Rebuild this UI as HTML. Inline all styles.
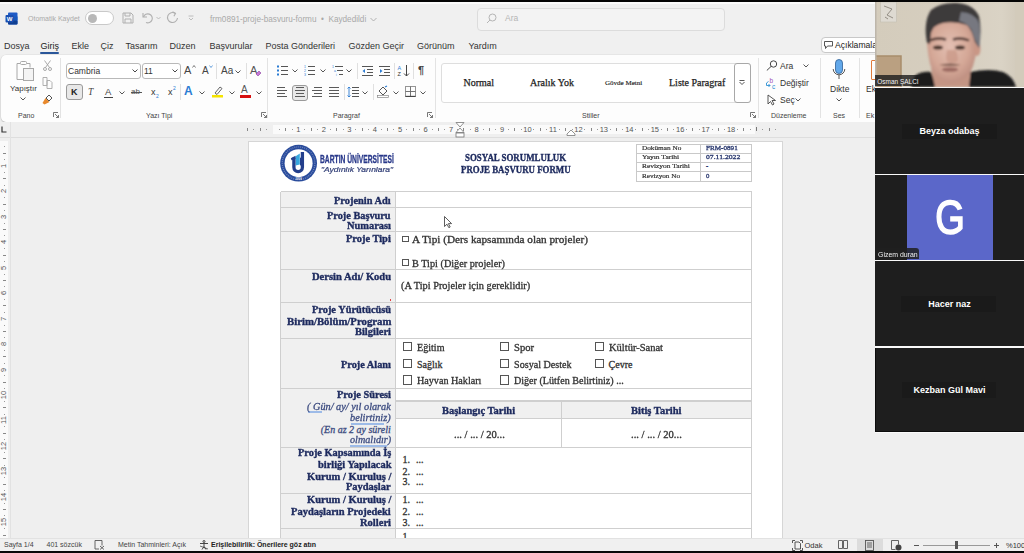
<!DOCTYPE html>
<html><head><meta charset="utf-8">
<style>
*{margin:0;padding:0;box-sizing:border-box}
html,body{width:1024px;height:553px;overflow:hidden;background:#efefef;font-family:"Liberation Sans",sans-serif;position:relative}
.a{position:absolute;white-space:nowrap}
.ui{font-family:"Liberation Sans",sans-serif;color:#262626}
.doc{font-family:"Liberation Serif",serif}
</style></head><body>
<!-- top black bar -->
<div class="a" style="left:0;top:0;width:1024px;height:2px;background:#050505"></div>
<div class="a" style="left:0;top:2px;width:1024px;height:2px;background:#fbfbfb"></div>

<!-- TITLEBAR -->
<div class="a" style="left:0;top:4px;width:1024px;height:32px;background:#f0f0f0"></div>
<!-- word icon -->
<svg class="a" style="left:5px;top:12px" width="13" height="13" viewBox="0 0 13 13">
<rect x="3" y="0.5" width="9.5" height="12" rx="1" fill="#1e5bc6"/><rect x="3" y="4.5" width="9.5" height="4" fill="#185abd"/><rect x="3" y="8.5" width="9.5" height="4" rx="1" fill="#103f91"/>
<rect x="0.5" y="3" width="8" height="7.5" rx="1" fill="#1a4fb0"/>
<text x="4.5" y="9" font-family="Liberation Sans" font-weight="bold" font-size="6" fill="#fff" text-anchor="middle">W</text></svg>
<div class="a" style="left:28px;top:14.5px;font-size:7px;color:#aaaaaa">Otomatik Kaydet</div>
<div class="a" style="left:85px;top:11px;width:29px;height:14px;border:1px solid #c9c9c9;border-radius:7px;background:#fff"></div>
<div class="a" style="left:88px;top:14px;width:9px;height:9px;border-radius:50%;background:#b8b8b8"></div>
<!-- save -->
<svg class="a" style="left:122px;top:12px" width="12" height="12" viewBox="0 0 12 12" fill="none" stroke="#b0b0b0" stroke-width="1">
<path d="M1 1h8l2 2v8H1z"/><path d="M3 1v3h5V1"/><path d="M3 11V7h6v4"/></svg>
<!-- undo -->
<svg class="a" style="left:141px;top:11px" width="13" height="13" viewBox="0 0 13 13" fill="none" stroke="#b0b0b0" stroke-width="1.1">
<path d="M2 2v4h4"/><path d="M2.5 6A4.5 4.5 0 1 1 5 11.5"/></svg>
<svg class="a" style="left:156px;top:16px" width="5" height="4" viewBox="0 0 5 4" fill="none" stroke="#b0b0b0" stroke-width="0.8"><path d="M0.5 1l2 2 2-2"/></svg>
<!-- redo -->
<svg class="a" style="left:166px;top:11px" width="13" height="13" viewBox="0 0 13 13" fill="none" stroke="#b0b0b0" stroke-width="1.1">
<path d="M6.5 0.8l3 1.6-1.6 2.8"/><path d="M9.2 2.3A5 5 0 1 0 11.5 7"/></svg>
<svg class="a" style="left:188px;top:15px" width="6" height="6" viewBox="0 0 6 6" fill="none" stroke="#b0b0b0" stroke-width="0.8"><path d="M0.5 1h5M1 3l2 2 2-2"/></svg>
<div class="a" style="left:210px;top:14.5px;font-size:8.2px;color:#a9a9a9">frm0891-proje-basvuru-formu &nbsp;•&nbsp; Kaydedildi</div>
<svg class="a" style="left:370px;top:17px" width="7" height="5" viewBox="0 0 7 5" fill="none" stroke="#a9a9a9" stroke-width="0.9"><path d="M0.5 1l3 3 3-3"/></svg>
<!-- search -->
<div class="a" style="left:477px;top:8px;width:248px;height:23px;border:1px solid #dcdcdc;border-radius:4px;background:#f3f3f3"></div>
<svg class="a" style="left:486px;top:13px" width="11" height="11" viewBox="0 0 11 11" fill="none" stroke="#b5b5b5" stroke-width="1"><circle cx="6.5" cy="4.5" r="3.5"/><path d="M4 7l-3 3"/></svg>
<div class="a" style="left:505px;top:13px;font-size:8.5px;color:#b5b5b5">Ara</div>


<!-- TABS -->
<div class="a ui" style="left:0;top:36px;width:1024px;height:19px;background:#f0f0f0"></div>
<div class="a ui" style="left:4px;top:40.6px;font-size:9px;color:#333">Dosya</div>
<div class="a ui" style="left:40.5px;top:40.6px;font-size:9px;color:#222">Giriş</div>
<div class="a" style="left:40px;top:52px;width:19px;height:2px;background:#2b579a;border-radius:1px"></div>
<div class="a ui" style="left:71.5px;top:40.6px;font-size:9px;color:#333">Ekle</div>
<div class="a ui" style="left:100.5px;top:40.6px;font-size:9px;color:#333">Çiz</div>
<div class="a ui" style="left:125.5px;top:40.6px;font-size:9px;color:#333">Tasarım</div>
<div class="a ui" style="left:169.5px;top:40.6px;font-size:9px;color:#333">Düzen</div>
<div class="a ui" style="left:209.5px;top:40.6px;font-size:9px;color:#333">Başvurular</div>
<div class="a ui" style="left:265.5px;top:40.6px;font-size:9px;color:#333">Posta Gönderileri</div>
<div class="a ui" style="left:348.5px;top:40.6px;font-size:9px;color:#333">Gözden Geçir</div>
<div class="a ui" style="left:417px;top:40.6px;font-size:9px;color:#333">Görünüm</div>
<div class="a ui" style="left:468.5px;top:40.6px;font-size:9px;color:#333">Yardım</div>
<div class="a" style="left:821px;top:37px;width:70px;height:15.5px;border:1px solid #c8c8c8;border-radius:4px;background:#fff"></div>
<svg class="a" style="left:824px;top:40.5px" width="9" height="8" viewBox="0 0 9 8" fill="none" stroke="#444" stroke-width="0.9"><path d="M0.5 0.5h8v4.5H3.5L1.5 7.5V5H0.5z"/></svg>
<div class="a ui" style="left:835px;top:40px;font-size:8.6px;color:#222">Açıklamalar</div>


<!-- RIBBON -->
<div class="a" style="left:1px;top:55px;width:1000px;height:67px;background:#fdfdfd;border-radius:5px;box-shadow:0 0 0 0.5px rgba(0,0,0,0.07),0 1px 1.5px rgba(0,0,0,0.18)"></div>
<!-- PANO -->
<svg class="a" style="left:14px;top:60px" width="22" height="22" viewBox="0 0 22 22" fill="none" stroke="#a8a8a8" stroke-width="1">
<path d="M3 3.5h3M13 3.5h3v4"/><rect x="6.5" y="1.5" width="6" height="3" rx="1"/><path d="M3 3.5v16h6"/><rect x="9.5" y="8.5" width="10" height="12" fill="#f4f4f4"/></svg>
<div class="a ui" style="left:10px;top:84px;font-size:8px;color:#333">Yapıştır</div>
<svg class="a" style="left:20px;top:97px" width="6" height="4" viewBox="0 0 6 4" fill="none" stroke="#444" stroke-width="0.9"><path d="M0.5 0.5l2.5 2.5 2.5-2.5"/></svg>
<svg class="a" style="left:43px;top:60px" width="9" height="11" viewBox="0 0 9 11" fill="none" stroke="#a0a0a0" stroke-width="0.9"><path d="M1.5 0.5l5 7M7.5 0.5l-5 7"/><circle cx="2" cy="9" r="1.5"/><circle cx="7" cy="9" r="1.5"/></svg>
<svg class="a" style="left:42px;top:77px" width="11" height="12" viewBox="0 0 11 12" fill="none" stroke="#a8a8a8" stroke-width="0.9"><path d="M1 0.5h4v8H1z"/><path d="M5 3.5h3l2 2v6H5z"/></svg>
<svg class="a" style="left:42px;top:94px" width="11" height="11" viewBox="0 0 11 11"><path d="M0.5 9l3-5 4 4-5 2.5z" fill="#e8892c"/><path d="M4 4l3-3 3 3-3 3z" fill="none" stroke="#555" stroke-width="1"/></svg>
<div class="a ui" style="left:18px;top:112px;font-size:7px;color:#444">Pano</div>
<svg class="a" style="left:53px;top:112px" width="6" height="6" viewBox="0 0 6 6" fill="none" stroke="#555" stroke-width="0.8"><path d="M0.5 5V0.5H5M2 2l3.5 3.5M3 5.5h2.5V3"/></svg>
<div class="a" style="left:60px;top:58px;width:1px;height:60px;background:#e3e3e3"></div>
<!-- YAZI TIPI -->
<div class="a" style="left:66px;top:63px;width:75px;height:16px;border:1px solid #b9b9b9;border-radius:3px;background:#fff"></div>
<div class="a ui" style="left:68px;top:66px;font-size:8.5px;color:#333">Cambria</div>
<svg class="a" style="left:132px;top:69px" width="6" height="4" viewBox="0 0 6 4" fill="none" stroke="#333" stroke-width="0.9"><path d="M0.5 0.5l2.5 2.5 2.5-2.5"/></svg>
<div class="a" style="left:142px;top:63px;width:39px;height:16px;border:1px solid #b9b9b9;border-radius:3px;background:#fff"></div>
<div class="a ui" style="left:144px;top:66px;font-size:8.5px;color:#333">11</div>
<svg class="a" style="left:172px;top:69px" width="6" height="4" viewBox="0 0 6 4" fill="none" stroke="#333" stroke-width="0.9"><path d="M0.5 0.5l2.5 2.5 2.5-2.5"/></svg>
<div class="a ui" style="left:184px;top:64px;font-size:11px;color:#444">A</div>
<svg class="a" style="left:192px;top:65px" width="4" height="3" viewBox="0 0 4 3" fill="none" stroke="#444" stroke-width="0.7"><path d="M0.5 2.5l1.5-2 1.5 2"/></svg>
<div class="a ui" style="left:202px;top:65px;font-size:10px;color:#444">A</div>
<svg class="a" style="left:209px;top:65px" width="4" height="3" viewBox="0 0 4 3" fill="none" stroke="#2b7cd3" stroke-width="0.7"><path d="M0.5 0.5l1.5 2 1.5-2"/></svg>
<div class="a" style="left:216px;top:63px;width:1px;height:16px;background:#e0e0e0"></div>
<div class="a ui" style="left:221px;top:65px;font-size:10px;color:#444">Aa</div>
<svg class="a" style="left:235px;top:70px" width="6" height="4" viewBox="0 0 6 4" fill="none" stroke="#444" stroke-width="0.9"><path d="M0.5 0.5l2.5 2.5 2.5-2.5"/></svg>
<div class="a" style="left:246px;top:63px;width:1px;height:16px;background:#e0e0e0"></div>
<div class="a ui" style="left:250px;top:64px;font-size:11px;color:#555">A</div>
<svg class="a" style="left:255px;top:70px" width="7" height="6" viewBox="0 0 7 6"><path d="M1 4l3-3 2 2-3 3z" fill="#c678d6" stroke="#8b3fa0" stroke-width="0.6"/></svg>
<!-- row 2 -->
<div class="a" style="left:66px;top:84px;width:17px;height:16px;border:1px solid #9a9a9a;border-radius:3px;background:#e8e8e8"></div>
<div class="a ui" style="left:71px;top:87px;font-size:9px;font-weight:bold;color:#222">K</div>
<div class="a ui" style="left:88px;top:87px;font-size:9.5px;font-style:italic;color:#444;font-family:'Liberation Serif'">T</div>
<div class="a ui" style="left:105px;top:86px;font-size:9.5px;color:#444">A</div>
<div class="a" style="left:104px;top:97px;width:9px;height:1px;background:#444"></div>
<svg class="a" style="left:119px;top:91px" width="6" height="4" viewBox="0 0 6 4" fill="none" stroke="#444" stroke-width="0.9"><path d="M0.5 0.5l2.5 2.5 2.5-2.5"/></svg>
<div class="a ui" style="left:131px;top:87px;font-size:8px;color:#555">ab</div>
<div class="a" style="left:131px;top:92px;width:11px;height:1px;background:#555"></div>
<div class="a ui" style="left:151px;top:87px;font-size:9px;color:#333">x</div>
<div class="a ui" style="left:156px;top:93px;font-size:5px;color:#2b7cd3">2</div>
<div class="a ui" style="left:168px;top:87px;font-size:9px;color:#333">x</div>
<div class="a ui" style="left:173px;top:85px;font-size:5px;color:#2b7cd3">2</div>
<div class="a" style="left:180px;top:84px;width:1px;height:16px;background:#e0e0e0"></div>
<div class="a ui" style="left:184px;top:84px;font-size:12px;font-weight:bold;color:#2b7cd3">A</div>
<svg class="a" style="left:199px;top:91px" width="6" height="4" viewBox="0 0 6 4" fill="none" stroke="#444" stroke-width="0.9"><path d="M0.5 0.5l2.5 2.5 2.5-2.5"/></svg>
<svg class="a" style="left:212px;top:85px" width="12" height="13" viewBox="0 0 12 13"><path d="M3 8l5-6 2 1.5-5 6z" fill="none" stroke="#555" stroke-width="0.9"/><rect x="0" y="10" width="11" height="2.5" fill="#f5e400"/></svg>
<svg class="a" style="left:229px;top:91px" width="6" height="4" viewBox="0 0 6 4" fill="none" stroke="#444" stroke-width="0.9"><path d="M0.5 0.5l2.5 2.5 2.5-2.5"/></svg>
<div class="a ui" style="left:241px;top:84px;font-size:10px;color:#555">A</div>
<div class="a" style="left:240px;top:95px;width:11px;height:2.5px;background:#d61010"></div>
<svg class="a" style="left:256px;top:91px" width="6" height="4" viewBox="0 0 6 4" fill="none" stroke="#444" stroke-width="0.9"><path d="M0.5 0.5l2.5 2.5 2.5-2.5"/></svg>
<div class="a ui" style="left:146px;top:112px;font-size:7px;color:#444">Yazı Tipi</div>
<svg class="a" style="left:261px;top:112px" width="6" height="6" viewBox="0 0 6 6" fill="none" stroke="#555" stroke-width="0.8"><path d="M0.5 5V0.5H5M2 2l3.5 3.5M3 5.5h2.5V3"/></svg>
<div class="a" style="left:267px;top:58px;width:1px;height:60px;background:#e3e3e3"></div>
<svg class="a" style="left:277px;top:65px" width="11" height="12" viewBox="0 0 11 12"><g fill="#2b7cd3"><rect x="0" y="0.5" width="2" height="2"/><rect x="0" y="4.5" width="2" height="2"/><rect x="0" y="8.5" width="2" height="2"/></g><g stroke="#555" stroke-width="1.1"><path d="M4 1.5h7M4 5.5h7M4 9.5h7"/></g></svg>
<svg class="a" style="left:292px;top:69px" width="6" height="4" viewBox="0 0 6 4" fill="none" stroke="#444" stroke-width="0.9"><path d="M0.5 0.5l2.5 2.5 2.5-2.5"/></svg>
<svg class="a" style="left:304px;top:65px" width="11" height="12" viewBox="0 0 11 12"><g fill="#2b7cd3" font-size="3.5" font-family="Liberation Sans"><text x="0" y="3">1</text><text x="0" y="7">2</text><text x="0" y="11">3</text></g><g stroke="#555" stroke-width="1.1"><path d="M4 1.5h7M4 5.5h7M4 9.5h7"/></g></svg>
<svg class="a" style="left:320px;top:69px" width="6" height="4" viewBox="0 0 6 4" fill="none" stroke="#444" stroke-width="0.9"><path d="M0.5 0.5l2.5 2.5 2.5-2.5"/></svg>
<svg class="a" style="left:332px;top:65px" width="11" height="12" viewBox="0 0 11 12"><g fill="#2b7cd3" font-size="3.5" font-family="Liberation Sans"><text x="0" y="3">1</text><text x="2" y="7">a</text><text x="4" y="11">i</text></g><g stroke="#555" stroke-width="1.1"><path d="M3 1.5h8M5 5.5h6M7 9.5h4"/></g></svg>
<svg class="a" style="left:346px;top:69px" width="6" height="4" viewBox="0 0 6 4" fill="none" stroke="#444" stroke-width="0.9"><path d="M0.5 0.5l2.5 2.5 2.5-2.5"/></svg>
<div class="a" style="left:357px;top:63px;width:1px;height:16px;background:#e0e0e0"></div>
<svg class="a" style="left:362px;top:65px" width="11" height="12" viewBox="0 0 11 12"><g stroke="#555" stroke-width="1.1"><path d="M0 1.5h11M5 4.5h6M5 7.5h6M0 10.5h11"/></g><path d="M0.5 6l2.5-2v4z" fill="#2b7cd3"/></svg>
<svg class="a" style="left:379px;top:65px" width="11" height="12" viewBox="0 0 11 12"><g stroke="#555" stroke-width="1.1"><path d="M0 1.5h11M5 4.5h6M5 7.5h6M0 10.5h11"/></g><path d="M3.5 6l-2.5-2v4z" fill="#2b7cd3"/></svg>
<div class="a" style="left:394px;top:63px;width:1px;height:16px;background:#e0e0e0"></div>
<svg class="a" style="left:397px;top:64px" width="13" height="13" viewBox="0 0 13 13"><text x="0.5" y="5.5" font-size="5.5" font-family="Liberation Sans" fill="#2b7cd3">A</text><text x="0.5" y="12" font-size="5.5" font-family="Liberation Sans" fill="#333">Z</text><path d="M9.5 1v11M7 9.5l2.5 2.5 2.5-2.5" fill="none" stroke="#444" stroke-width="1"/></svg>
<div class="a" style="left:413px;top:63px;width:1px;height:16px;background:#e0e0e0"></div>
<div class="a ui" style="left:418px;top:64px;font-size:11px;font-weight:bold;color:#444">¶</div>
<svg class="a" style="left:277px;top:86px" width="10" height="12" viewBox="0 0 10 12" stroke="#5a5a5a" stroke-width="1"><path d="M0 1.5H8"/><path d="M0 4.5H10"/><path d="M0 7.5H8"/><path d="M0 10.5H10"/></svg>
<div class="a" style="left:292px;top:85px;width:16px;height:16px;border:1px solid #9a9a9a;border-radius:3px;background:#e8e8e8"></div>
<svg class="a" style="left:295px;top:86px" width="10" height="12" viewBox="0 0 10 12" stroke="#5a5a5a" stroke-width="1"><path d="M1 1.5H9"/><path d="M0 4.5H10"/><path d="M1 7.5H9"/><path d="M0 10.5H10"/></svg>
<svg class="a" style="left:312px;top:86px" width="10" height="12" viewBox="0 0 10 12" stroke="#5a5a5a" stroke-width="1"><path d="M2 1.5H10"/><path d="M0 4.5H10"/><path d="M2 7.5H10"/><path d="M0 10.5H10"/></svg>
<svg class="a" style="left:329px;top:86px" width="10" height="12" viewBox="0 0 10 12" stroke="#5a5a5a" stroke-width="1"><path d="M0 1.5H10"/><path d="M0 4.5H10"/><path d="M0 7.5H10"/><path d="M0 10.5H10"/></svg>
<div class="a" style="left:344px;top:84px;width:1px;height:16px;background:#e0e0e0"></div>
<svg class="a" style="left:347px;top:86px" width="12" height="12" viewBox="0 0 12 12"><path d="M2 1v10M0.5 2.5L2 1l1.5 1.5M0.5 9.5L2 11l1.5-1.5" fill="none" stroke="#2b7cd3" stroke-width="0.9"/><g stroke="#555" stroke-width="1"><path d="M5 1.5h7M5 4.5h7M5 7.5h7M5 10.5h7"/></g></svg>
<svg class="a" style="left:362px;top:91px" width="6" height="4" viewBox="0 0 6 4" fill="none" stroke="#444" stroke-width="0.9"><path d="M0.5 0.5l2.5 2.5 2.5-2.5"/></svg>
<div class="a" style="left:373px;top:84px;width:1px;height:16px;background:#e0e0e0"></div>
<svg class="a" style="left:377px;top:85px" width="12" height="13" viewBox="0 0 12 13"><path d="M2 6l4-4 4 4-4 4z" fill="none" stroke="#555" stroke-width="1"/><path d="M8 2l2-1" stroke="#2b7cd3" stroke-width="1.2"/><rect x="0.5" y="10.5" width="11" height="2" fill="#fff" stroke="#888" stroke-width="0.7"/></svg>
<svg class="a" style="left:393px;top:91px" width="6" height="4" viewBox="0 0 6 4" fill="none" stroke="#444" stroke-width="0.9"><path d="M0.5 0.5l2.5 2.5 2.5-2.5"/></svg>
<svg class="a" style="left:405px;top:86px" width="11" height="11" viewBox="0 0 11 11" fill="none" stroke="#666" stroke-width="0.9"><rect x="0.5" y="0.5" width="10" height="10" stroke-dasharray="1 0"/><path d="M5.5 0.5v10M0.5 5.5h10"/><path d="M0.5 10.5h10" stroke="#444" stroke-width="1.3"/></svg>
<svg class="a" style="left:420px;top:91px" width="6" height="4" viewBox="0 0 6 4" fill="none" stroke="#444" stroke-width="0.9"><path d="M0.5 0.5l2.5 2.5 2.5-2.5"/></svg>
<div class="a ui" style="left:333px;top:112px;font-size:7px;color:#444">Paragraf</div>
<svg class="a" style="left:427px;top:112px" width="6" height="6" viewBox="0 0 6 6" fill="none" stroke="#555" stroke-width="0.8"><path d="M0.5 5V0.5H5M2 2l3.5 3.5M3 5.5h2.5V3"/></svg>
<div class="a" style="left:435px;top:58px;width:1px;height:60px;background:#e3e3e3"></div>
<div class="a" style="left:441px;top:63px;width:310px;height:40px;border:1px solid #dedede;border-radius:3px;background:#fff"></div>
<div class="a" style="left:734px;top:63px;width:17px;height:40px;border:1px solid #a8a8a8;border-radius:3px;background:#fff"></div>
<svg class="a" style="left:739px;top:80px" width="6" height="5" viewBox="0 0 6 5" fill="none" stroke="#444" stroke-width="0.9"><path d="M0.5 0.5h5M0.5 2l2.5 2.5 2.5-2.5"/></svg>
<div class="a doc" style="left:463.5px;top:77px;font-size:10px;color:#222;-webkit-text-stroke:0.25px #222">Normal</div>
<div class="a doc" style="left:530px;top:77px;font-size:10px;color:#222;-webkit-text-stroke:0.25px #222">Aralık Yok</div>
<div class="a doc" style="left:605px;top:79px;font-size:7px;color:#222;-webkit-text-stroke:0.15px #222">Gövde Metni</div>
<div class="a doc" style="left:669px;top:77px;font-size:10px;color:#222;-webkit-text-stroke:0.25px #222">Liste Paragraf</div>
<div class="a ui" style="left:582px;top:112px;font-size:7px;color:#444">Stiller</div>
<svg class="a" style="left:750px;top:112px" width="6" height="6" viewBox="0 0 6 6" fill="none" stroke="#555" stroke-width="0.8"><path d="M0.5 5V0.5H5M2 2l3.5 3.5M3 5.5h2.5V3"/></svg>
<div class="a" style="left:757.5px;top:58px;width:1px;height:60px;background:#e3e3e3"></div>
<svg class="a" style="left:766px;top:60px" width="12" height="11" viewBox="0 0 12 11" fill="none" stroke="#444" stroke-width="1"><circle cx="7.5" cy="4" r="3.2"/><path d="M5.2 6.3L0.8 10.5"/></svg>
<div class="a ui" style="left:780px;top:61px;font-size:8.5px;color:#333">Ara</div>
<svg class="a" style="left:803px;top:64px" width="6" height="4" viewBox="0 0 6 4" fill="none" stroke="#444" stroke-width="0.9"><path d="M0.5 0.5l2.5 2.5 2.5-2.5"/></svg>
<svg class="a" style="left:765px;top:77px" width="12" height="12" viewBox="0 0 12 12"><text x="4.5" y="5.5" font-size="6.5" font-family="Liberation Sans" fill="#a04fb8">b</text><text x="7" y="11.8" font-size="6.5" font-family="Liberation Sans" fill="#2b8fd3">c</text><path d="M3.5 4.5Q0.5 5.5 1.5 8.5L5 8.5M3.5 7l1.5 1.5-1.5 1.5" fill="none" stroke="#2b8fd3" stroke-width="0.9"/></svg>
<div class="a ui" style="left:780px;top:78px;font-size:8.5px;color:#333">Değiştir</div>
<svg class="a" style="left:767px;top:94px" width="9" height="12" viewBox="0 0 9 12" fill="#fff" stroke="#444" stroke-width="0.9"><path d="M1 1v9l2.5-2.5 2 3.5 1.5-1-2-3.5h3.5z"/></svg>
<div class="a ui" style="left:780px;top:95px;font-size:8.5px;color:#333">Seç</div>
<svg class="a" style="left:795px;top:98px" width="6" height="4" viewBox="0 0 6 4" fill="none" stroke="#444" stroke-width="0.9"><path d="M0.5 0.5l2.5 2.5 2.5-2.5"/></svg>
<div class="a ui" style="left:771px;top:112px;font-size:7px;color:#444">Düzenleme</div>
<div class="a" style="left:819.5px;top:58px;width:1px;height:60px;background:#e3e3e3"></div>
<svg class="a" style="left:832px;top:59px" width="14" height="22" viewBox="0 0 14 22"><rect x="3.5" y="0.5" width="7" height="14" rx="3.5" fill="#62a8ea" stroke="#2f5f96" stroke-width="0.8"/><path d="M1.2 10a5.8 5.8 0 0 0 11.6 0M7 16v4" fill="none" stroke="#444" stroke-width="0.9"/></svg>
<div class="a ui" style="left:830px;top:84px;font-size:8.5px;color:#333">Dikte</div>
<svg class="a" style="left:836px;top:98px" width="6" height="4" viewBox="0 0 6 4" fill="none" stroke="#444" stroke-width="0.9"><path d="M0.5 0.5l2.5 2.5 2.5-2.5"/></svg>
<div class="a ui" style="left:833px;top:112px;font-size:7px;color:#444">Ses</div>
<div class="a" style="left:858.5px;top:58px;width:1px;height:60px;background:#e3e3e3"></div>
<div class="a ui" style="left:866px;top:84px;font-size:8.5px;color:#333">Ek</div>
<div class="a ui" style="left:866px;top:112px;font-size:7px;color:#444">Ek</div>
<div class="a" style="left:871px;top:60px;width:8px;height:20px;border:1px solid #e07a3a;border-radius:1px"></div>


<!-- RULER -->
<!--PAGESTART-->
<div class="a" style="left:0;top:122px;width:1024px;height:16px;background:#efefef"></div>
<div class="a" style="left:0;top:137px;width:1024px;height:1px;background:#dedede"></div>
<svg class="a" style="left:1px;top:126px" width="6" height="7" viewBox="0 0 6 7"><path d="M1 0.5v5.5h4.5" fill="none" stroke="#333" stroke-width="1.2"/></svg>
<div class="a" style="left:10px;top:122px;width:1px;height:431px;background:#e2e2e2"></div>
<div class="a" style="left:248px;top:124.5px;width:534px;height:9.5px;background:#efefef"></div>
<div class="a" style="left:273px;top:124.5px;width:482px;height:9.5px;background:#fafafa"></div>
<div class="a" style="left:247.1px;top:127.5px;width:1px;height:3px;background:#888"></div>
<div class="a" style="left:253.4px;top:128.5px;width:1px;height:1px;background:#999"></div>
<div class="a" style="left:259.8px;top:127.5px;width:1px;height:3px;background:#888"></div>
<div class="a" style="left:266.1px;top:128.5px;width:1px;height:1px;background:#999"></div>
<div class="a" style="left:278.9px;top:128.5px;width:1px;height:1px;background:#999"></div>
<div class="a" style="left:285.2px;top:127.5px;width:1px;height:3px;background:#888"></div>
<div class="a" style="left:291.6px;top:128.5px;width:1px;height:1px;background:#999"></div>
<div class="a" style="left:288.4px;top:125.5px;width:20px;text-align:center;font-size:7.5px;line-height:8px;color:#555;font-family:'Liberation Sans'">1</div>
<div class="a" style="left:304.3px;top:128.5px;width:1px;height:1px;background:#999"></div>
<div class="a" style="left:310.7px;top:127.5px;width:1px;height:3px;background:#888"></div>
<div class="a" style="left:317.0px;top:128.5px;width:1px;height:1px;background:#999"></div>
<div class="a" style="left:313.9px;top:125.5px;width:20px;text-align:center;font-size:7.5px;line-height:8px;color:#555;font-family:'Liberation Sans'">2</div>
<div class="a" style="left:329.8px;top:128.5px;width:1px;height:1px;background:#999"></div>
<div class="a" style="left:336.1px;top:127.5px;width:1px;height:3px;background:#888"></div>
<div class="a" style="left:342.5px;top:128.5px;width:1px;height:1px;background:#999"></div>
<div class="a" style="left:339.4px;top:125.5px;width:20px;text-align:center;font-size:7.5px;line-height:8px;color:#555;font-family:'Liberation Sans'">3</div>
<div class="a" style="left:355.2px;top:128.5px;width:1px;height:1px;background:#999"></div>
<div class="a" style="left:361.6px;top:127.5px;width:1px;height:3px;background:#888"></div>
<div class="a" style="left:367.9px;top:128.5px;width:1px;height:1px;background:#999"></div>
<div class="a" style="left:364.8px;top:125.5px;width:20px;text-align:center;font-size:7.5px;line-height:8px;color:#555;font-family:'Liberation Sans'">4</div>
<div class="a" style="left:380.7px;top:128.5px;width:1px;height:1px;background:#999"></div>
<div class="a" style="left:387.0px;top:127.5px;width:1px;height:3px;background:#888"></div>
<div class="a" style="left:393.4px;top:128.5px;width:1px;height:1px;background:#999"></div>
<div class="a" style="left:390.2px;top:125.5px;width:20px;text-align:center;font-size:7.5px;line-height:8px;color:#555;font-family:'Liberation Sans'">5</div>
<div class="a" style="left:406.1px;top:128.5px;width:1px;height:1px;background:#999"></div>
<div class="a" style="left:412.5px;top:127.5px;width:1px;height:3px;background:#888"></div>
<div class="a" style="left:418.8px;top:128.5px;width:1px;height:1px;background:#999"></div>
<div class="a" style="left:415.7px;top:125.5px;width:20px;text-align:center;font-size:7.5px;line-height:8px;color:#555;font-family:'Liberation Sans'">6</div>
<div class="a" style="left:431.6px;top:128.5px;width:1px;height:1px;background:#999"></div>
<div class="a" style="left:437.9px;top:127.5px;width:1px;height:3px;background:#888"></div>
<div class="a" style="left:444.3px;top:128.5px;width:1px;height:1px;background:#999"></div>
<div class="a" style="left:441.1px;top:125.5px;width:20px;text-align:center;font-size:7.5px;line-height:8px;color:#555;font-family:'Liberation Sans'">7</div>
<div class="a" style="left:457.0px;top:128.5px;width:1px;height:1px;background:#999"></div>
<div class="a" style="left:463.4px;top:127.5px;width:1px;height:3px;background:#888"></div>
<div class="a" style="left:469.7px;top:128.5px;width:1px;height:1px;background:#999"></div>
<div class="a" style="left:466.6px;top:125.5px;width:20px;text-align:center;font-size:7.5px;line-height:8px;color:#555;font-family:'Liberation Sans'">8</div>
<div class="a" style="left:482.5px;top:128.5px;width:1px;height:1px;background:#999"></div>
<div class="a" style="left:488.8px;top:127.5px;width:1px;height:3px;background:#888"></div>
<div class="a" style="left:495.2px;top:128.5px;width:1px;height:1px;background:#999"></div>
<div class="a" style="left:492.0px;top:125.5px;width:20px;text-align:center;font-size:7.5px;line-height:8px;color:#555;font-family:'Liberation Sans'">9</div>
<div class="a" style="left:507.9px;top:128.5px;width:1px;height:1px;background:#999"></div>
<div class="a" style="left:514.3px;top:127.5px;width:1px;height:3px;background:#888"></div>
<div class="a" style="left:520.6px;top:128.5px;width:1px;height:1px;background:#999"></div>
<div class="a" style="left:517.5px;top:125.5px;width:20px;text-align:center;font-size:7.5px;line-height:8px;color:#555;font-family:'Liberation Sans'">10</div>
<div class="a" style="left:533.4px;top:128.5px;width:1px;height:1px;background:#999"></div>
<div class="a" style="left:539.7px;top:127.5px;width:1px;height:3px;background:#888"></div>
<div class="a" style="left:546.1px;top:128.5px;width:1px;height:1px;background:#999"></div>
<div class="a" style="left:543.0px;top:125.5px;width:20px;text-align:center;font-size:7.5px;line-height:8px;color:#555;font-family:'Liberation Sans'">11</div>
<div class="a" style="left:558.8px;top:128.5px;width:1px;height:1px;background:#999"></div>
<div class="a" style="left:565.2px;top:127.5px;width:1px;height:3px;background:#888"></div>
<div class="a" style="left:571.5px;top:128.5px;width:1px;height:1px;background:#999"></div>
<div class="a" style="left:568.4px;top:125.5px;width:20px;text-align:center;font-size:7.5px;line-height:8px;color:#555;font-family:'Liberation Sans'">12</div>
<div class="a" style="left:584.3px;top:128.5px;width:1px;height:1px;background:#999"></div>
<div class="a" style="left:590.6px;top:127.5px;width:1px;height:3px;background:#888"></div>
<div class="a" style="left:597.0px;top:128.5px;width:1px;height:1px;background:#999"></div>
<div class="a" style="left:593.8px;top:125.5px;width:20px;text-align:center;font-size:7.5px;line-height:8px;color:#555;font-family:'Liberation Sans'">13</div>
<div class="a" style="left:609.7px;top:128.5px;width:1px;height:1px;background:#999"></div>
<div class="a" style="left:616.1px;top:127.5px;width:1px;height:3px;background:#888"></div>
<div class="a" style="left:622.4px;top:128.5px;width:1px;height:1px;background:#999"></div>
<div class="a" style="left:619.3px;top:125.5px;width:20px;text-align:center;font-size:7.5px;line-height:8px;color:#555;font-family:'Liberation Sans'">14</div>
<div class="a" style="left:635.2px;top:128.5px;width:1px;height:1px;background:#999"></div>
<div class="a" style="left:641.5px;top:127.5px;width:1px;height:3px;background:#888"></div>
<div class="a" style="left:647.9px;top:128.5px;width:1px;height:1px;background:#999"></div>
<div class="a" style="left:644.8px;top:125.5px;width:20px;text-align:center;font-size:7.5px;line-height:8px;color:#555;font-family:'Liberation Sans'">15</div>
<div class="a" style="left:660.6px;top:128.5px;width:1px;height:1px;background:#999"></div>
<div class="a" style="left:667.0px;top:127.5px;width:1px;height:3px;background:#888"></div>
<div class="a" style="left:673.3px;top:128.5px;width:1px;height:1px;background:#999"></div>
<div class="a" style="left:670.2px;top:125.5px;width:20px;text-align:center;font-size:7.5px;line-height:8px;color:#555;font-family:'Liberation Sans'">16</div>
<div class="a" style="left:686.1px;top:128.5px;width:1px;height:1px;background:#999"></div>
<div class="a" style="left:692.4px;top:127.5px;width:1px;height:3px;background:#888"></div>
<div class="a" style="left:698.8px;top:128.5px;width:1px;height:1px;background:#999"></div>
<div class="a" style="left:695.6px;top:125.5px;width:20px;text-align:center;font-size:7.5px;line-height:8px;color:#555;font-family:'Liberation Sans'">17</div>
<div class="a" style="left:711.5px;top:128.5px;width:1px;height:1px;background:#999"></div>
<div class="a" style="left:717.9px;top:127.5px;width:1px;height:3px;background:#888"></div>
<div class="a" style="left:724.2px;top:128.5px;width:1px;height:1px;background:#999"></div>
<div class="a" style="left:721.1px;top:125.5px;width:20px;text-align:center;font-size:7.5px;line-height:8px;color:#555;font-family:'Liberation Sans'">18</div>
<div class="a" style="left:737.0px;top:128.5px;width:1px;height:1px;background:#999"></div>
<div class="a" style="left:743.3px;top:127.5px;width:1px;height:3px;background:#888"></div>
<div class="a" style="left:749.7px;top:128.5px;width:1px;height:1px;background:#999"></div>
<div class="a" style="left:756.0px;top:127px;width:1px;height:4px;background:#777"></div>
<div class="a" style="left:762.4px;top:128.5px;width:1px;height:1px;background:#999"></div>
<div class="a" style="left:768.8px;top:127.5px;width:1px;height:3px;background:#888"></div>
<div class="a" style="left:775.1px;top:128.5px;width:1px;height:1px;background:#999"></div>
<svg class="a" style="left:455px;top:122px" width="10" height="16" viewBox="0 0 10 16" fill="#fff" stroke="#777" stroke-width="0.8"><path d="M1 0.5h8L5 5z"/><path d="M5 6l4 4.5H1z"/><rect x="1" y="11" width="8" height="4"/></svg>
<svg class="a" style="left:566px;top:129px" width="10" height="7" viewBox="0 0 10 7" fill="#fff" stroke="#777" stroke-width="0.8"><path d="M1 6.5h8V5L5 1 1 5z"/></svg>
<div class="a" style="left:0;top:140.5px;width:7.5px;height:400px;background:#fafafa"></div>
<div class="a" style="left:3.5px;top:146.4px;width:1px;height:1px;background:#999"></div>
<div class="a" style="left:2.5px;top:152.7px;width:3px;height:1px;background:#888"></div>
<div class="a" style="left:3.5px;top:159.1px;width:1px;height:1px;background:#999"></div>
<div class="a" style="left:-6.5px;top:161.9px;width:20px;text-align:center;font-size:7.5px;line-height:8px;color:#555;font-family:'Liberation Sans';transform:rotate(-90deg)">1</div>
<div class="a" style="left:3.5px;top:171.8px;width:1px;height:1px;background:#999"></div>
<div class="a" style="left:2.5px;top:178.2px;width:3px;height:1px;background:#888"></div>
<div class="a" style="left:3.5px;top:184.5px;width:1px;height:1px;background:#999"></div>
<div class="a" style="left:-6.5px;top:187.4px;width:20px;text-align:center;font-size:7.5px;line-height:8px;color:#555;font-family:'Liberation Sans';transform:rotate(-90deg)">2</div>
<div class="a" style="left:3.5px;top:197.3px;width:1px;height:1px;background:#999"></div>
<div class="a" style="left:2.5px;top:203.6px;width:3px;height:1px;background:#888"></div>
<div class="a" style="left:3.5px;top:210.0px;width:1px;height:1px;background:#999"></div>
<div class="a" style="left:-6.5px;top:212.8px;width:20px;text-align:center;font-size:7.5px;line-height:8px;color:#555;font-family:'Liberation Sans';transform:rotate(-90deg)">3</div>
<div class="a" style="left:3.5px;top:222.7px;width:1px;height:1px;background:#999"></div>
<div class="a" style="left:2.5px;top:229.1px;width:3px;height:1px;background:#888"></div>
<div class="a" style="left:3.5px;top:235.4px;width:1px;height:1px;background:#999"></div>
<div class="a" style="left:-6.5px;top:238.3px;width:20px;text-align:center;font-size:7.5px;line-height:8px;color:#555;font-family:'Liberation Sans';transform:rotate(-90deg)">4</div>
<div class="a" style="left:3.5px;top:248.2px;width:1px;height:1px;background:#999"></div>
<div class="a" style="left:2.5px;top:254.5px;width:3px;height:1px;background:#888"></div>
<div class="a" style="left:3.5px;top:260.9px;width:1px;height:1px;background:#999"></div>
<div class="a" style="left:-6.5px;top:263.8px;width:20px;text-align:center;font-size:7.5px;line-height:8px;color:#555;font-family:'Liberation Sans';transform:rotate(-90deg)">5</div>
<div class="a" style="left:3.5px;top:273.6px;width:1px;height:1px;background:#999"></div>
<div class="a" style="left:2.5px;top:280.0px;width:3px;height:1px;background:#888"></div>
<div class="a" style="left:3.5px;top:286.3px;width:1px;height:1px;background:#999"></div>
<div class="a" style="left:-6.5px;top:289.2px;width:20px;text-align:center;font-size:7.5px;line-height:8px;color:#555;font-family:'Liberation Sans';transform:rotate(-90deg)">6</div>
<div class="a" style="left:3.5px;top:299.1px;width:1px;height:1px;background:#999"></div>
<div class="a" style="left:2.5px;top:305.4px;width:3px;height:1px;background:#888"></div>
<div class="a" style="left:3.5px;top:311.8px;width:1px;height:1px;background:#999"></div>
<div class="a" style="left:-6.5px;top:314.6px;width:20px;text-align:center;font-size:7.5px;line-height:8px;color:#555;font-family:'Liberation Sans';transform:rotate(-90deg)">7</div>
<div class="a" style="left:3.5px;top:324.5px;width:1px;height:1px;background:#999"></div>
<div class="a" style="left:2.5px;top:330.9px;width:3px;height:1px;background:#888"></div>
<div class="a" style="left:3.5px;top:337.2px;width:1px;height:1px;background:#999"></div>
<div class="a" style="left:-6.5px;top:340.1px;width:20px;text-align:center;font-size:7.5px;line-height:8px;color:#555;font-family:'Liberation Sans';transform:rotate(-90deg)">8</div>
<div class="a" style="left:3.5px;top:350.0px;width:1px;height:1px;background:#999"></div>
<div class="a" style="left:2.5px;top:356.3px;width:3px;height:1px;background:#888"></div>
<div class="a" style="left:3.5px;top:362.7px;width:1px;height:1px;background:#999"></div>
<div class="a" style="left:-6.5px;top:365.5px;width:20px;text-align:center;font-size:7.5px;line-height:8px;color:#555;font-family:'Liberation Sans';transform:rotate(-90deg)">9</div>
<div class="a" style="left:3.5px;top:375.4px;width:1px;height:1px;background:#999"></div>
<div class="a" style="left:2.5px;top:381.8px;width:3px;height:1px;background:#888"></div>
<div class="a" style="left:3.5px;top:388.1px;width:1px;height:1px;background:#999"></div>
<div class="a" style="left:-6.5px;top:391.0px;width:20px;text-align:center;font-size:7.5px;line-height:8px;color:#555;font-family:'Liberation Sans';transform:rotate(-90deg)">10</div>
<div class="a" style="left:3.5px;top:400.9px;width:1px;height:1px;background:#999"></div>
<div class="a" style="left:2.5px;top:407.2px;width:3px;height:1px;background:#888"></div>
<div class="a" style="left:3.5px;top:413.6px;width:1px;height:1px;background:#999"></div>
<div class="a" style="left:-6.5px;top:416.4px;width:20px;text-align:center;font-size:7.5px;line-height:8px;color:#555;font-family:'Liberation Sans';transform:rotate(-90deg)">11</div>
<div class="a" style="left:3.5px;top:426.3px;width:1px;height:1px;background:#999"></div>
<div class="a" style="left:2.5px;top:432.7px;width:3px;height:1px;background:#888"></div>
<div class="a" style="left:3.5px;top:439.0px;width:1px;height:1px;background:#999"></div>
<div class="a" style="left:-6.5px;top:441.9px;width:20px;text-align:center;font-size:7.5px;line-height:8px;color:#555;font-family:'Liberation Sans';transform:rotate(-90deg)">12</div>
<div class="a" style="left:3.5px;top:451.8px;width:1px;height:1px;background:#999"></div>
<div class="a" style="left:2.5px;top:458.1px;width:3px;height:1px;background:#888"></div>
<div class="a" style="left:3.5px;top:464.5px;width:1px;height:1px;background:#999"></div>
<div class="a" style="left:-6.5px;top:467.3px;width:20px;text-align:center;font-size:7.5px;line-height:8px;color:#555;font-family:'Liberation Sans';transform:rotate(-90deg)">13</div>
<div class="a" style="left:3.5px;top:477.2px;width:1px;height:1px;background:#999"></div>
<div class="a" style="left:2.5px;top:483.6px;width:3px;height:1px;background:#888"></div>
<div class="a" style="left:3.5px;top:489.9px;width:1px;height:1px;background:#999"></div>
<div class="a" style="left:-6.5px;top:492.8px;width:20px;text-align:center;font-size:7.5px;line-height:8px;color:#555;font-family:'Liberation Sans';transform:rotate(-90deg)">14</div>
<div class="a" style="left:3.5px;top:502.7px;width:1px;height:1px;background:#999"></div>
<div class="a" style="left:2.5px;top:509.0px;width:3px;height:1px;background:#888"></div>
<div class="a" style="left:3.5px;top:515.4px;width:1px;height:1px;background:#999"></div>
<div class="a" style="left:-6.5px;top:518.2px;width:20px;text-align:center;font-size:7.5px;line-height:8px;color:#555;font-family:'Liberation Sans';transform:rotate(-90deg)">15</div>
<div class="a" style="left:3.5px;top:528.1px;width:1px;height:1px;background:#999"></div>
<div class="a" style="left:2.5px;top:534.5px;width:3px;height:1px;background:#888"></div>
<div class="a" style="left:247.5px;top:140.5px;width:535px;height:420px;background:#fff;border:1px solid #d6d6d6"></div>
<svg class="a" style="left:279px;top:143.5px" width="39" height="39" viewBox="0 0 39 39">
<circle cx="19.6" cy="19.2" r="18.4" fill="#2a4c9c"/>
<circle cx="19.6" cy="19.2" r="14" fill="#fff"/>
<circle cx="19.6" cy="19.2" r="16.3" fill="none" stroke="#c9d3ea" stroke-width="1.3" stroke-dasharray="0.9 1.1" opacity="0.45"/>
<path d="M21 14 L23.2 12.5 V21 L21 21.5 Z" fill="#233f8c"/>
<path d="M16.6 12.2 L20.8 9.6 V20.5 L16.6 21.5 Z" fill="#37a8de"/>
<path d="M14.9 13.5 V23.3 A4.25 4.25 0 0 0 23.4 23.3 V8" fill="none" stroke="#233f8c" stroke-width="3.3"/>
<path d="M11.8 14.2 L16.5 11.8 V15 L12.5 16.2 Z" fill="#233f8c"/>
<text x="19.6" y="36" font-size="2.8" font-family="Liberation Sans" font-weight="bold" fill="#e8ecf5" text-anchor="middle">2008</text>
</svg>
<div class="a" style="left:636.3px;top:144.1px;width:115.6px;height:38.3px;border:1px solid #c9c9c9"></div>
<div class="a" style="left:636.3px;top:153.0px;width:115.6px;height:1px;background:#c9c9c9"></div>
<div class="a" style="left:636.3px;top:161.9px;width:115.6px;height:1px;background:#c9c9c9"></div>
<div class="a" style="left:636.3px;top:170.8px;width:115.6px;height:1px;background:#c9c9c9"></div>
<div class="a" style="left:699.7px;top:144.1px;width:1px;height:38.3px;background:#c9c9c9"></div>
<div class="a" style="left:280.5px;top:191.7px;width:115.3px;height:368.3px;background:#f0f0f0"></div>
<div class="a" style="left:395.8px;top:401px;width:355.7px;height:17.8px;background:#f0f0f0"></div>
<div class="a" style="left:280.5px;top:191.2px;width:471.0px;height:1px;background:#cfcfcf"></div>
<div class="a" style="left:280.5px;top:207.0px;width:471.0px;height:1px;background:#cfcfcf"></div>
<div class="a" style="left:280.5px;top:231.1px;width:471.0px;height:1px;background:#cfcfcf"></div>
<div class="a" style="left:280.5px;top:269.2px;width:471.0px;height:1px;background:#cfcfcf"></div>
<div class="a" style="left:280.5px;top:302.3px;width:471.0px;height:1px;background:#cfcfcf"></div>
<div class="a" style="left:280.5px;top:337.5px;width:471.0px;height:1px;background:#cfcfcf"></div>
<div class="a" style="left:280.5px;top:388.1px;width:471.0px;height:1px;background:#cfcfcf"></div>
<div class="a" style="left:280.5px;top:446.5px;width:471.0px;height:1px;background:#cfcfcf"></div>
<div class="a" style="left:280.5px;top:492.9px;width:471.0px;height:1px;background:#cfcfcf"></div>
<div class="a" style="left:280.5px;top:527.8px;width:471.0px;height:1px;background:#cfcfcf"></div>
<div class="a" style="left:280.0px;top:191.7px;width:1px;height:368.3px;background:#cfcfcf"></div>
<div class="a" style="left:751.0px;top:191.7px;width:1px;height:368.3px;background:#cfcfcf"></div>
<div class="a" style="left:395.3px;top:191.7px;width:1px;height:368.3px;background:#cfcfcf"></div>
<div class="a" style="left:395.8px;top:400px;width:355.7px;height:2px;background:#cfcfcf"></div>
<div class="a" style="left:395.8px;top:418.3px;width:355.7px;height:1px;background:#cfcfcf"></div>
<div class="a" style="left:561px;top:401px;width:1px;height:46px;background:#cfcfcf"></div>
<div class="a" style="left:402.2px;top:235.6px;width:6.6px;height:6.6px;border:0.8px solid #555;background:#fff"></div>
<div class="a" style="left:402.2px;top:259.0px;width:6.6px;height:6.6px;border:0.8px solid #555;background:#fff"></div>
<div class="a" style="left:402.5px;top:342.2px;width:9.2px;height:9.2px;border:1px solid #555;background:#fff"></div>
<div class="a" style="left:402.5px;top:359.2px;width:9.2px;height:9.2px;border:1px solid #555;background:#fff"></div>
<div class="a" style="left:402.5px;top:375.4px;width:9.2px;height:9.2px;border:1px solid #555;background:#fff"></div>
<div class="a" style="left:500.2px;top:342.2px;width:9.2px;height:9.2px;border:1px solid #555;background:#fff"></div>
<div class="a" style="left:500.2px;top:359.2px;width:9.2px;height:9.2px;border:1px solid #555;background:#fff"></div>
<div class="a" style="left:500.2px;top:375.4px;width:9.2px;height:9.2px;border:1px solid #555;background:#fff"></div>
<div class="a" style="left:594.8px;top:342.2px;width:9.2px;height:9.2px;border:1px solid #555;background:#fff"></div>
<div class="a" style="left:594.8px;top:359.2px;width:9.2px;height:9.2px;border:1px solid #555;background:#fff"></div>
<div class="a" style="left:389.5px;top:299.3px;width:1.3px;height:1.3px;background:#e04040"></div>
<div class="a" style="left:307.5px;top:411.3px;width:14.5px;height:2px;background:#9dbbe8"></div>
<div class="a" style="left:350.5px;top:422.8px;width:33.5px;height:2px;background:#9dbbe8"></div>
<div class="a" style="left:350px;top:444.8px;width:37px;height:2px;background:#9dbbe8"></div>
<svg class="a" style="left:444px;top:216px" width="8" height="12" viewBox="0 0 8 12"><path d="M0.5 0.5v10l2.5-2.3 1.8 3.5 1.4-0.7-1.8-3.4h3.2z" fill="#fff" stroke="#333" stroke-width="0.8"/></svg>
<div class="a" style="left:464.80px;top:153.06px;font-family:'Liberation Serif';font-size:9.6px;font-weight:bold;font-style:normal;line-height:9.6px;color:#1d2a5e;transform:scaleX(0.9267);transform-origin:0 0;-webkit-text-stroke:0.35px #1d2a5e">SOSYAL SORUMLULUK</div>
<div class="a" style="left:460.70px;top:164.76px;font-family:'Liberation Serif';font-size:9.6px;font-weight:bold;font-style:normal;line-height:9.6px;color:#1d2a5e;transform:scaleX(0.9221);transform-origin:0 0;-webkit-text-stroke:0.35px #1d2a5e">PROJE BAŞVURU FORMU</div>
<div class="a" style="left:320.00px;top:153.97px;font-family:'Liberation Sans';font-size:11.5px;font-weight:bold;font-style:normal;line-height:11.5px;color:#28388a;transform:scaleX(0.5833);transform-origin:0 0;-webkit-text-stroke:0.3px #28388a">BARTIN ÜNİVERSİTESİ</div>
<div class="a" style="left:321.00px;top:166.01px;font-family:'Liberation Sans';font-size:7.2px;font-weight:normal;font-style:italic;line-height:7.2px;color:#36437a;transform:scaleX(1.1782);transform-origin:0 0;-webkit-text-stroke:0.2px #36437a">&quot;Aydınlık Yarınlara&quot;</div>
<div class="a" style="left:641.70px;top:145.04px;font-family:'Liberation Serif';font-size:7px;font-weight:normal;font-style:normal;line-height:7px;color:#333333;transform:scaleX(1.0363);transform-origin:0 0;-webkit-text-stroke:0.2px #333333">Doküman No</div>
<div class="a" style="left:641.70px;top:153.94px;font-family:'Liberation Serif';font-size:7px;font-weight:normal;font-style:normal;line-height:7px;color:#333333;transform:scaleX(1.0734);transform-origin:0 0;-webkit-text-stroke:0.2px #333333">Yayın Tarihi</div>
<div class="a" style="left:641.70px;top:162.84px;font-family:'Liberation Serif';font-size:7px;font-weight:normal;font-style:normal;line-height:7px;color:#333333;transform:scaleX(1.0626);transform-origin:0 0;-webkit-text-stroke:0.2px #333333">Revizyon Tarihi</div>
<div class="a" style="left:641.70px;top:172.54px;font-family:'Liberation Serif';font-size:7px;font-weight:normal;font-style:normal;line-height:7px;color:#333333;transform:scaleX(1.0231);transform-origin:0 0;-webkit-text-stroke:0.2px #333333">Revizyon No</div>
<div class="a" style="left:705.90px;top:145.17px;font-family:'Liberation Serif';font-size:6.6px;font-weight:normal;font-style:normal;line-height:6.6px;color:#2b3a70;transform:scaleX(1.0814);transform-origin:0 0;-webkit-text-stroke:0.3px #2b3a70">FRM-0891</div>
<div class="a" style="left:705.90px;top:154.07px;font-family:'Liberation Serif';font-size:6.6px;font-weight:normal;font-style:normal;line-height:6.6px;color:#2b3a70;transform:scaleX(1.1652);transform-origin:0 0;-webkit-text-stroke:0.3px #2b3a70">07.11.2022</div>
<div class="a" style="left:706.00px;top:162.77px;font-family:'Liberation Serif';font-size:6.6px;font-weight:normal;font-style:normal;line-height:6.6px;color:#2b3a70;-webkit-text-stroke:0.3px #2b3a70">-</div>
<div class="a" style="left:705.90px;top:172.67px;font-family:'Liberation Serif';font-size:6.6px;font-weight:normal;font-style:normal;line-height:6.6px;color:#2b3a70;transform:scaleX(1.0313);transform-origin:0 0;-webkit-text-stroke:0.3px #2b3a70">0</div>
<div class="a" style="left:334.40px;top:195.93px;font-family:'Liberation Serif';font-size:10px;font-weight:bold;font-style:normal;line-height:10px;color:#1d2a5e;transform:scaleX(1.0376);transform-origin:0 0;-webkit-text-stroke:0.35px #1d2a5e">Projenin Adı</div>
<div class="a" style="left:327.40px;top:210.53px;font-family:'Liberation Serif';font-size:10px;font-weight:bold;font-style:normal;line-height:10px;color:#1d2a5e;transform:scaleX(1.0297);transform-origin:0 0;-webkit-text-stroke:0.35px #1d2a5e">Proje Başvuru</div>
<div class="a" style="left:347.00px;top:221.12px;font-family:'Liberation Serif';font-size:10px;font-weight:bold;font-style:normal;line-height:10px;color:#1d2a5e;transform:scaleX(1.0418);transform-origin:0 0;-webkit-text-stroke:0.35px #1d2a5e">Numarası</div>
<div class="a" style="left:346.20px;top:234.32px;font-family:'Liberation Serif';font-size:10px;font-weight:bold;font-style:normal;line-height:10px;color:#1d2a5e;transform:scaleX(1.0403);transform-origin:0 0;-webkit-text-stroke:0.35px #1d2a5e">Proje Tipi</div>
<div class="a" style="left:311.90px;top:271.52px;font-family:'Liberation Serif';font-size:10px;font-weight:bold;font-style:normal;line-height:10px;color:#1d2a5e;transform:scaleX(1.0542);transform-origin:0 0;-webkit-text-stroke:0.35px #1d2a5e">Dersin Adı/ Kodu</div>
<div class="a" style="left:311.90px;top:304.82px;font-family:'Liberation Serif';font-size:10px;font-weight:bold;font-style:normal;line-height:10px;color:#1d2a5e;transform:scaleX(1.0353);transform-origin:0 0;-webkit-text-stroke:0.35px #1d2a5e">Proje Yürütücüsü</div>
<div class="a" style="left:286.60px;top:316.52px;font-family:'Liberation Serif';font-size:10px;font-weight:bold;font-style:normal;line-height:10px;color:#1d2a5e;transform:scaleX(1.0759);transform-origin:0 0;-webkit-text-stroke:0.35px #1d2a5e">Birim/Bölüm/Program</div>
<div class="a" style="left:355.00px;top:327.32px;font-family:'Liberation Serif';font-size:10px;font-weight:bold;font-style:normal;line-height:10px;color:#1d2a5e;transform:scaleX(1.0449);transform-origin:0 0;-webkit-text-stroke:0.35px #1d2a5e">Bilgileri</div>
<div class="a" style="left:341.10px;top:359.93px;font-family:'Liberation Serif';font-size:10px;font-weight:bold;font-style:normal;line-height:10px;color:#1d2a5e;transform:scaleX(1.0302);transform-origin:0 0;-webkit-text-stroke:0.35px #1d2a5e">Proje Alanı</div>
<div class="a" style="left:337.00px;top:389.93px;font-family:'Liberation Serif';font-size:10px;font-weight:bold;font-style:normal;line-height:10px;color:#1d2a5e;transform:scaleX(1.0360);transform-origin:0 0;-webkit-text-stroke:0.35px #1d2a5e">Proje Süresi</div>
<div class="a" style="left:307.20px;top:401.93px;font-family:'Liberation Serif';font-size:10px;font-weight:normal;font-style:italic;line-height:10px;color:#3d4c80;transform:scaleX(1.0263);transform-origin:0 0;-webkit-text-stroke:0.3px #3d4c80">( Gün/ ay/ yıl olarak</div>
<div class="a" style="left:350.30px;top:413.43px;font-family:'Liberation Serif';font-size:10px;font-weight:normal;font-style:italic;line-height:10px;color:#3d4c80;transform:scaleX(1.0316);transform-origin:0 0;-webkit-text-stroke:0.3px #3d4c80">belirtiniz)</div>
<div class="a" style="left:320.70px;top:424.82px;font-family:'Liberation Serif';font-size:10px;font-weight:normal;font-style:italic;line-height:10px;color:#3d4c80;-webkit-text-stroke:0.3px #3d4c80">(En az 2 ay süreli</div>
<div class="a" style="left:349.80px;top:435.23px;font-family:'Liberation Serif';font-size:10px;font-weight:normal;font-style:italic;line-height:10px;color:#3d4c80;transform:scaleX(1.0157);transform-origin:0 0;-webkit-text-stroke:0.3px #3d4c80">olmalıdır)</div>
<div class="a" style="left:297.60px;top:448.43px;font-family:'Liberation Serif';font-size:10px;font-weight:bold;font-style:normal;line-height:10px;color:#1d2a5e;transform:scaleX(1.0333);transform-origin:0 0;-webkit-text-stroke:0.35px #1d2a5e">Proje Kapsamında İş</div>
<div class="a" style="left:317.50px;top:460.12px;font-family:'Liberation Serif';font-size:10px;font-weight:bold;font-style:normal;line-height:10px;color:#1d2a5e;transform:scaleX(1.0428);transform-origin:0 0;-webkit-text-stroke:0.35px #1d2a5e">birliği Yapılacak</div>
<div class="a" style="left:306.60px;top:471.52px;font-family:'Liberation Serif';font-size:10px;font-weight:bold;font-style:normal;line-height:10px;color:#1d2a5e;transform:scaleX(1.0509);transform-origin:0 0;-webkit-text-stroke:0.35px #1d2a5e">Kurum / Kuruluş /</div>
<div class="a" style="left:346.40px;top:481.82px;font-family:'Liberation Serif';font-size:10px;font-weight:bold;font-style:normal;line-height:10px;color:#1d2a5e;transform:scaleX(1.0425);transform-origin:0 0;-webkit-text-stroke:0.35px #1d2a5e">Paydaşlar</div>
<div class="a" style="left:306.60px;top:495.43px;font-family:'Liberation Serif';font-size:10px;font-weight:bold;font-style:normal;line-height:10px;color:#1d2a5e;transform:scaleX(1.0509);transform-origin:0 0;-webkit-text-stroke:0.35px #1d2a5e">Kurum / Kuruluş /</div>
<div class="a" style="left:291.30px;top:506.83px;font-family:'Liberation Serif';font-size:10px;font-weight:bold;font-style:normal;line-height:10px;color:#1d2a5e;transform:scaleX(1.0484);transform-origin:0 0;-webkit-text-stroke:0.35px #1d2a5e">Paydaşların Projedeki</div>
<div class="a" style="left:360.00px;top:517.62px;font-family:'Liberation Serif';font-size:10px;font-weight:bold;font-style:normal;line-height:10px;color:#1d2a5e;transform:scaleX(1.0531);transform-origin:0 0;-webkit-text-stroke:0.35px #1d2a5e">Rolleri</div>
<div class="a" style="left:412.00px;top:235.12px;font-family:'Liberation Serif';font-size:10px;font-weight:normal;font-style:normal;line-height:10px;color:#333333;transform:scaleX(1.1216);transform-origin:0 0;-webkit-text-stroke:0.3px #333333">A Tipi (Ders kapsamında olan projeler)</div>
<div class="a" style="left:412.00px;top:258.52px;font-family:'Liberation Serif';font-size:10px;font-weight:normal;font-style:normal;line-height:10px;color:#333333;transform:scaleX(1.0239);transform-origin:0 0;-webkit-text-stroke:0.3px #333333">B Tipi (Diğer projeler)</div>
<div class="a" style="left:401.40px;top:281.12px;font-family:'Liberation Serif';font-size:10px;font-weight:normal;font-style:normal;line-height:10px;color:#333333;transform:scaleX(1.0336);transform-origin:0 0;-webkit-text-stroke:0.3px #333333">(A Tipi Projeler için gereklidir)</div>
<div class="a" style="left:417.00px;top:343.12px;font-family:'Liberation Serif';font-size:10px;font-weight:normal;font-style:normal;line-height:10px;color:#333333;transform:scaleX(1.0098);transform-origin:0 0;-webkit-text-stroke:0.3px #333333">Eğitim</div>
<div class="a" style="left:417.00px;top:360.12px;font-family:'Liberation Serif';font-size:10px;font-weight:normal;font-style:normal;line-height:10px;color:#333333;-webkit-text-stroke:0.3px #333333">Sağlık</div>
<div class="a" style="left:417.00px;top:376.32px;font-family:'Liberation Serif';font-size:10px;font-weight:normal;font-style:normal;line-height:10px;color:#333333;transform:scaleX(1.0127);transform-origin:0 0;-webkit-text-stroke:0.3px #333333">Hayvan Hakları</div>
<div class="a" style="left:514.00px;top:343.12px;font-family:'Liberation Serif';font-size:10px;font-weight:normal;font-style:normal;line-height:10px;color:#333333;transform:scaleX(1.0579);transform-origin:0 0;-webkit-text-stroke:0.3px #333333">Spor</div>
<div class="a" style="left:514.00px;top:360.12px;font-family:'Liberation Serif';font-size:10px;font-weight:normal;font-style:normal;line-height:10px;color:#333333;transform:scaleX(1.0131);transform-origin:0 0;-webkit-text-stroke:0.3px #333333">Sosyal Destek</div>
<div class="a" style="left:514.00px;top:376.32px;font-family:'Liberation Serif';font-size:10px;font-weight:normal;font-style:normal;line-height:10px;color:#333333;transform:scaleX(1.0077);transform-origin:0 0;-webkit-text-stroke:0.3px #333333">Diğer (Lütfen Belirtiniz) ...</div>
<div class="a" style="left:608.60px;top:343.12px;font-family:'Liberation Serif';font-size:10px;font-weight:normal;font-style:normal;line-height:10px;color:#333333;transform:scaleX(1.0492);transform-origin:0 0;-webkit-text-stroke:0.3px #333333">Kültür-Sanat</div>
<div class="a" style="left:608.60px;top:360.12px;font-family:'Liberation Serif';font-size:10px;font-weight:normal;font-style:normal;line-height:10px;color:#333333;-webkit-text-stroke:0.3px #333333">Çevre</div>
<div class="a" style="left:442.15px;top:406.12px;font-family:'Liberation Serif';font-size:10px;font-weight:bold;font-style:normal;line-height:10px;color:#1d2a5e;transform:scaleX(1.0480);transform-origin:0 0;-webkit-text-stroke:0.35px #1d2a5e">Başlangıç Tarihi</div>
<div class="a" style="left:631.35px;top:406.12px;font-family:'Liberation Serif';font-size:10px;font-weight:bold;font-style:normal;line-height:10px;color:#1d2a5e;transform:scaleX(1.0504);transform-origin:0 0;-webkit-text-stroke:0.35px #1d2a5e">Bitiş Tarihi</div>
<div class="a" style="left:453.90px;top:429.93px;font-family:'Liberation Serif';font-size:10px;font-weight:normal;font-style:normal;line-height:10px;color:#333333;transform:scaleX(1.0570);transform-origin:0 0;-webkit-text-stroke:0.3px #333333">... / ... / 20...</div>
<div class="a" style="left:631.00px;top:429.93px;font-family:'Liberation Serif';font-size:10px;font-weight:normal;font-style:normal;line-height:10px;color:#333333;transform:scaleX(1.0570);transform-origin:0 0;-webkit-text-stroke:0.3px #333333">... / ... / 20...</div>
<div class="a" style="left:402.50px;top:454.73px;font-family:'Liberation Serif';font-size:10px;font-weight:normal;font-style:normal;line-height:10px;color:#333333;-webkit-text-stroke:0.3px #333333">1.</div>
<div class="a" style="left:416.00px;top:454.73px;font-family:'Liberation Serif';font-size:10px;font-weight:normal;font-style:normal;line-height:10px;color:#333333;-webkit-text-stroke:0.3px #333333">...</div>
<div class="a" style="left:402.50px;top:466.52px;font-family:'Liberation Serif';font-size:10px;font-weight:normal;font-style:normal;line-height:10px;color:#333333;-webkit-text-stroke:0.3px #333333">2.</div>
<div class="a" style="left:416.00px;top:466.52px;font-family:'Liberation Serif';font-size:10px;font-weight:normal;font-style:normal;line-height:10px;color:#333333;-webkit-text-stroke:0.3px #333333">...</div>
<div class="a" style="left:402.50px;top:477.32px;font-family:'Liberation Serif';font-size:10px;font-weight:normal;font-style:normal;line-height:10px;color:#333333;-webkit-text-stroke:0.3px #333333">3.</div>
<div class="a" style="left:416.00px;top:477.32px;font-family:'Liberation Serif';font-size:10px;font-weight:normal;font-style:normal;line-height:10px;color:#333333;-webkit-text-stroke:0.3px #333333">...</div>
<div class="a" style="left:402.50px;top:495.43px;font-family:'Liberation Serif';font-size:10px;font-weight:normal;font-style:normal;line-height:10px;color:#333333;-webkit-text-stroke:0.3px #333333">1.</div>
<div class="a" style="left:416.00px;top:495.43px;font-family:'Liberation Serif';font-size:10px;font-weight:normal;font-style:normal;line-height:10px;color:#333333;-webkit-text-stroke:0.3px #333333">...</div>
<div class="a" style="left:402.50px;top:506.83px;font-family:'Liberation Serif';font-size:10px;font-weight:normal;font-style:normal;line-height:10px;color:#333333;-webkit-text-stroke:0.3px #333333">2.</div>
<div class="a" style="left:416.00px;top:506.83px;font-family:'Liberation Serif';font-size:10px;font-weight:normal;font-style:normal;line-height:10px;color:#333333;-webkit-text-stroke:0.3px #333333">...</div>
<div class="a" style="left:402.50px;top:517.62px;font-family:'Liberation Serif';font-size:10px;font-weight:normal;font-style:normal;line-height:10px;color:#333333;-webkit-text-stroke:0.3px #333333">3.</div>
<div class="a" style="left:416.00px;top:517.62px;font-family:'Liberation Serif';font-size:10px;font-weight:normal;font-style:normal;line-height:10px;color:#333333;-webkit-text-stroke:0.3px #333333">...</div>
<div class="a" style="left:402.50px;top:531.92px;font-family:'Liberation Serif';font-size:10px;font-weight:normal;font-style:normal;line-height:10px;color:#333333;-webkit-text-stroke:0.3px #333333">1.</div>
<div class="a" style="left:416.00px;top:531.92px;font-family:'Liberation Serif';font-size:10px;font-weight:normal;font-style:normal;line-height:10px;color:#333333;-webkit-text-stroke:0.3px #333333">...</div>
<!--PAGEEND-->
<!-- VIDEO -->
<div class="a" style="left:875px;top:2px;width:149px;height:431px;background:#fafafa"></div>
<!-- tile 1: camera -->
<svg class="a" style="left:875px;top:2px" width="149" height="85" viewBox="0 0 149 85">
<defs>
<linearGradient id="wall" x1="0" x2="1" y1="0" y2="0"><stop offset="0" stop-color="#d4ccbc"/><stop offset="0.5" stop-color="#d6cebf"/><stop offset="0.85" stop-color="#dad3c5"/><stop offset="1" stop-color="#cfc7b8"/></linearGradient>
<radialGradient id="skin" cx="0.45" cy="0.45" r="0.6"><stop offset="0" stop-color="#e3bfb2"/><stop offset="0.6" stop-color="#d5a897"/><stop offset="1" stop-color="#b98a7d"/></radialGradient>
<filter id="bl" x="-20%" y="-20%" width="140%" height="140%"><feGaussianBlur stdDeviation="1.1"/></filter>
<filter id="bl2"><feGaussianBlur stdDeviation="0.6"/></filter>
</defs>
<rect width="149" height="85" fill="url(#wall)"/>
<g filter="url(#bl2)">
<rect x="5.5" y="0" width="16" height="20" fill="#dedad2" stroke="#c4beb2" stroke-width="0.6"/>
<path d="M9 4l8 3-5 6 6 3M10 15l3 2" fill="none" stroke="#8a857c" stroke-width="0.9"/>
<rect x="-2" y="54" width="28" height="34" fill="#baa081" stroke="#a88d6b" stroke-width="1.5"/><rect x="0" y="0" width="1.5" height="85" fill="#bdb6aa"/>
<rect x="140" y="0" width="9" height="85" fill="#d3cbbb"/>
</g>
<g filter="url(#bl)">
<!-- shirt -->
<path d="M36 85 L40 74 Q46 69 56 70 L62 85 Z" fill="#1c1c1f"/><path d="M92 85 L95 70 Q115 66 128 70 Q138 74 141 85 Z" fill="#1c1c1f"/>
<!-- neck -->
<path d="M56 66 L96 66 L94 85 L60 85 Z" fill="#c49584"/>
<!-- face -->
<path d="M52 24 Q51 45 55 62 Q60 78 75 81 Q92 80 98 64 Q103 48 103 26 Q97 15 77 14 Q57 15 52 24 Z" fill="url(#skin)"/>
<!-- ear -->
<ellipse cx="102" cy="47" rx="3.5" ry="7" fill="#c99786"/>
<!-- hair -->
<path d="M52 41 Q48 20 56 8 Q66 0 82 1 Q98 2 104 14 Q107 28 104 46 L100 40 Q97 28 92 23 Q80 19 68 21 Q58 23 56 31 L55 42 Z" fill="#3e3a3b"/>
<path d="M86 10 Q100 11 104 21 Q106 34 104 46 Q99 37 96 27 Q92 21 84 19 Z" fill="#777880"/>
<!-- brows/eyes -->
<path d="M55 38.5 Q62 35 71 37.5" stroke="#4a332e" stroke-width="2.4" fill="none"/>
<path d="M78 37.5 Q86 35 94 38.5" stroke="#4a332e" stroke-width="2.4" fill="none"/>
<ellipse cx="63" cy="45.5" rx="5" ry="2" fill="#45302b"/>
<ellipse cx="85" cy="45.5" rx="5" ry="2" fill="#45302b"/>
<!-- nose shade -->
<path d="M72 48 Q70 58 73 60 Q78 62 82 60 Q84 56 81 48" fill="#c79585" opacity="0.7"/>
<!-- mustache/mouth -->
<path d="M64 63 Q75 60 86 63 Q75 65 64 63Z" fill="#7a574c"/>
<ellipse cx="75" cy="67.5" rx="8" ry="2.3" fill="#9c6a62"/>
</g>
<rect x="0" y="73" width="45" height="11" fill="rgba(28,28,28,0.8)"/>
<text x="2.3" y="82" font-family="Liberation Sans" font-size="8" fill="#f2f2f2" textLength="41.3" lengthAdjust="spacingAndGlyphs">Osman ŞALCI</text>
</svg>
<div class="a" style="left:875px;top:88px;width:149px;height:86px;background:#1e1e1e"></div>
<div class="a" style="left:902px;top:124px;width:95px;height:15px;background:#1a1a1a"></div>
<div class="a" style="left:875px;top:126px;width:149px;text-align:center;font-size:9px;font-weight:bold;color:#fff;font-family:'Liberation Sans'">Beyza odabaş</div>
<div class="a" style="left:875px;top:175px;width:149px;height:85px;background:#1e1e1e"></div>
<div class="a" style="left:907px;top:175px;width:86px;height:85px;background:#5b67c9"></div>
<div class="a" style="left:907px;top:197.5px;width:86px;text-align:center;font-size:38px;line-height:40px;color:#fff;font-family:'Liberation Sans';-webkit-text-stroke:1.3px #fff;transform:scaleY(1.26)">G</div>
<div class="a" style="left:876px;top:248px;width:43px;height:11px;background:rgba(32,32,32,0.85);border-radius:0 3px 0 0"></div>
<div class="a" style="left:877.5px;top:249.5px;font-size:7.7px;color:#f0f0f0;font-family:'Liberation Sans';transform:scaleX(0.9);transform-origin:0 0">Gizem duran</div>
<div class="a" style="left:875px;top:261px;width:149px;height:84.5px;background:#1e1e1e"></div>
<div class="a" style="left:901px;top:296px;width:95px;height:16px;background:#1a1a1a"></div>
<div class="a" style="left:875px;top:299px;width:149px;text-align:center;font-size:9px;font-weight:bold;color:#fff;font-family:'Liberation Sans'">Hacer naz</div>
<div class="a" style="left:875px;top:347.5px;width:149px;height:84.5px;background:#1e1e1e;border-left:1px solid #0c0c0c;border-bottom:1px solid #0c0c0c"></div>
<div class="a" style="left:902px;top:382px;width:94px;height:16px;background:#1a1a1a"></div>
<div class="a" style="left:875px;top:385px;width:149px;text-align:center;font-size:9px;font-weight:bold;color:#fff;font-family:'Liberation Sans'">Kezban Gül Mavi</div>


<!-- STATUS -->
<div class="a" style="left:0;top:537.5px;width:1024px;height:14px;background:#f0f0f0;border-top:1px solid #e2e2e2"></div>
<div class="a" style="left:0;top:551px;width:1024px;height:2px;background:#0a0a0a"></div>
<div class="a ui" style="left:4px;top:541px;font-size:7px;color:#444">Sayfa 1/4</div>
<div class="a ui" style="left:46.5px;top:541px;font-size:7px;color:#444">401 sözcük</div>
<svg class="a" style="left:94px;top:539.5px" width="11" height="10" viewBox="0 0 11 10" fill="none" stroke="#555" stroke-width="0.9"><path d="M1 0.5h7v5M1 0.5v8.5h4"/><path d="M6 6l4 3.5M10 6l-4 3.5"/></svg>
<div class="a ui" style="left:118px;top:541px;font-size:7px;color:#444">Metin Tahminleri: Açık</div>
<svg class="a" style="left:199px;top:539.5px" width="10" height="10" viewBox="0 0 10 10" fill="none" stroke="#333" stroke-width="0.9"><circle cx="5" cy="1.5" r="1"/><path d="M1 3.5h8M5 3.5v3M5 6.5l-2 3M5 6.5l2 3"/><path d="M1 6l8 3" stroke-width="0.7"/></svg>
<div class="a ui" style="left:211px;top:541px;font-size:7px;font-weight:bold;color:#222">Erişilebilirlik: Önerilere göz atın</div>
<svg class="a" style="left:792px;top:539.5px" width="11" height="11" viewBox="0 0 11 11" fill="none" stroke="#444" stroke-width="0.9"><path d="M0.5 3V0.5H3M8 0.5h2.5V3M10.5 8v2.5H8M3 10.5H0.5V8"/><path d="M3 2h4l1.5 1.5V9H3z"/></svg>
<div class="a ui" style="left:804.5px;top:540.5px;font-size:7.5px;color:#333">Odak</div>
<svg class="a" style="left:837.5px;top:540px" width="10" height="9" viewBox="0 0 10 9" fill="none" stroke="#555" stroke-width="0.9"><path d="M0.5 0.5h4v8h-4zM5.5 0.5h4v8h-4z"/></svg>
<div class="a" style="left:856.5px;top:538.5px;width:26px;height:12.5px;background:#dcdcdc"></div>
<svg class="a" style="left:865px;top:539.5px" width="9" height="11" viewBox="0 0 9 11" fill="none" stroke="#555" stroke-width="0.9"><rect x="0.5" y="0.5" width="8" height="10"/><path d="M2 3h5M2 5h5M2 7h5"/></svg>
<svg class="a" style="left:891px;top:539.5px" width="11" height="11" viewBox="0 0 11 11"><path d="M0.5 0.5h7v4" fill="none" stroke="#555" stroke-width="0.9"/><path d="M0.5 0.5v9h4" fill="none" stroke="#555" stroke-width="0.9"/><circle cx="7.5" cy="7.5" r="3" fill="#444"/></svg>
<div class="a" style="left:913.5px;top:544.5px;width:5px;height:1px;background:#555"></div>
<div class="a" style="left:923px;top:544.5px;width:67px;height:1px;background:#999"></div>
<div class="a" style="left:955px;top:541px;width:3px;height:8px;background:#555"></div>
<div class="a" style="left:993.5px;top:544.5px;width:5px;height:1px;background:#555"></div>
<div class="a" style="left:995.5px;top:542.5px;width:1px;height:5px;background:#555"></div>
<div class="a ui" style="left:1006px;top:540.5px;font-size:7.5px;color:#333">%100</div>

</body></html>
